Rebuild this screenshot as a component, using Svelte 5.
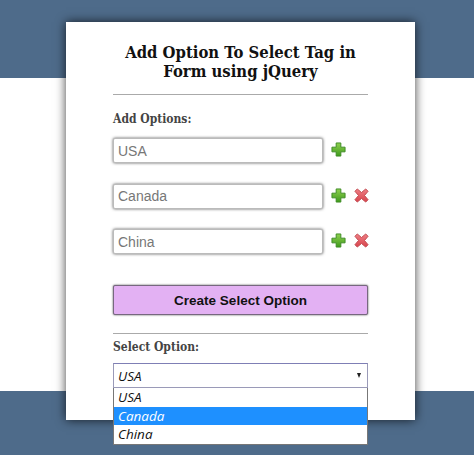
<script>
  const rows = [
    { value: 'USA', remove: false },
    { value: 'Canada', remove: true },
    { value: 'China', remove: true },
  ]
  const options = ['USA', 'Canada', 'China']
  let selected = 'USA'
</script>

<div class="page">
  <div class="band top"></div>
  <div class="band middle"></div>
  <div class="band bottom"></div>

  <div class="card">
    <h2>Add Option To Select Tag in<br />Form using jQuery</h2>
    <hr class="rule-title" />
    <div class="label add-label">Add Options:</div>

    {#each rows as row}
      <div class="row">
        <input type="text" value={row.value} />
        <svg class="icon" viewBox="0 0 16 16" aria-label="add">
          <defs>
            <linearGradient id="plus-{row.value}" x1="0" y1="0" x2="0" y2="1">
              <stop offset="0" stop-color="#8fd14f" />
              <stop offset="1" stop-color="#3f9a1c" />
            </linearGradient>
          </defs>
          <path d="M5.500 1h5v4.500H15v5h-4.500V15h-5v-4.500H1v-5h4.500z" fill="url(#plus-{row.value})" stroke="#3c8a22" stroke-width="1" stroke-linejoin="round" />
        </svg>
        {#if row.remove}
          <svg class="icon" viewBox="0 0 16 16" aria-label="remove">
            <defs>
              <linearGradient id="cross-{row.value}" x1="0" y1="0" x2="0" y2="1">
                <stop offset="0" stop-color="#ee7f85" />
                <stop offset="1" stop-color="#d8434c" />
              </linearGradient>
            </defs>
            <path d="M3.500 1 8 4.800 12.500 1 15 3.500 11.200 8 15 12.500 12.500 15 8 11.200 3.500 15 1 12.500 4.800 8 1 3.500z" fill="url(#cross-{row.value})" stroke="#c0474e" stroke-width="1" stroke-linejoin="round" />
          </svg>
        {/if}
      </div>
    {/each}

    <button type="button">Create Select Option</button>
    <hr class="rule-select" />
    <div class="label select-label">Select Option:</div>

    <div class="select">
      <div class="select-value">
        <span>{selected}</span>
        <span class="arrow"></span>
      </div>
      <ul>
        {#each options as option}
          <li class:active={option === 'Canada'}>{option}</li>
        {/each}
      </ul>
    </div>
  </div>
</div>

<style>
  :global(body) {
    margin: 0;
  }
  .page {
    position: relative;
    width: 474px;
    height: 455px;
    overflow: hidden;
    display: flex;
    flex-direction: column;
  }
  .band.top {
    height: 78px;
    background: #4e6b8a;
  }
  .band.middle {
    height: 313px;
    background: #fff;
  }
  .band.bottom {
    flex: 1;
    background: #4e6b8a;
  }
  .card {
    position: absolute;
    left: 66px;
    top: 22px;
    width: 349px;
    height: 398px;
    box-sizing: border-box;
    padding: 21px 47px 0;
    background: #fff;
    box-shadow: 0 0 10px rgba(0, 0, 0, 0.75);
  }
  h2 {
    margin: 0;
    font: bold 16.500px/19px "DejaVu Serif Condensed", "DejaVu Serif", serif;
    color: #111;
    text-align: center;
  }
  hr {
    margin: 0;
    border: 0;
    height: 1px;
    background: #aaa;
  }
  .rule-title {
    margin-top: 13px;
  }
  .label {
    font: bold 12px/16px "DejaVu Serif Condensed", "DejaVu Serif", serif;
    color: #444;
  }
  .add-label {
    margin-top: 16px;
    margin-bottom: 11px;
  }
  .row {
    display: flex;
    align-items: center;
    height: 25px;
    margin-bottom: 20.500px;
  }
  input {
    flex: none;
    width: 210px;
    height: 25px;
    box-sizing: border-box;
    margin: 0 8px 0 0;
    padding: 0 4px;
    border: 1px solid #bbb;
    border-radius: 2px;
    box-shadow: 0 0 3px #555;
    font: 14px "Liberation Sans", Arial, sans-serif;
    color: #777;
    background: #fff;
  }
  .icon {
    width: 15px;
    height: 15px;
    margin: 0 8px 2px 0;
    flex: none;
  }
  button {
    display: block;
    width: 255px;
    height: 30px;
    margin-top: 31px;
    padding: 0;
    border: 1px solid #77687f;
    border-radius: 2px;
    box-shadow: 0 0 2px #444;
    background: #e3b1f3;
    font: bold 13.500px "Liberation Sans", Arial, sans-serif;
    color: #111;
  }
  .rule-select {
    margin-top: 18px;
  }
  .select-label {
    margin-top: 5px;
    margin-bottom: 8px;
  }
  .select {
    position: relative;
    width: 255px;
    font: italic 13.500px "Open Sans", sans-serif;
    color: #111;
  }
  .select-value {
    display: flex;
    align-items: center;
    justify-content: space-between;
    height: 25px;
    box-sizing: border-box;
    padding: 0 6px 0 4px;
    border: 1px solid #9a9ab8;
    border-top-color: #7f7fb5;
    background: #fff;
  }
  .arrow {
    width: 0;
    height: 0;
    border-left: 2.500px solid transparent;
    border-right: 2.500px solid transparent;
    border-top: 5px solid #222;
  }
  ul {
    position: absolute;
    left: 0;
    top: 25px;
    width: 100%;
    box-sizing: border-box;
    margin: 0;
    padding: 0;
    list-style: none;
    background: #fff;
    border: 1px solid #777;
    border-top: 0;
  }
  li {
    height: 18.500px;
    line-height: 18px;
    padding-left: 4px;
  }
  li.active {
    background: #1e90ff;
    color: #fff;
  }
</style>
